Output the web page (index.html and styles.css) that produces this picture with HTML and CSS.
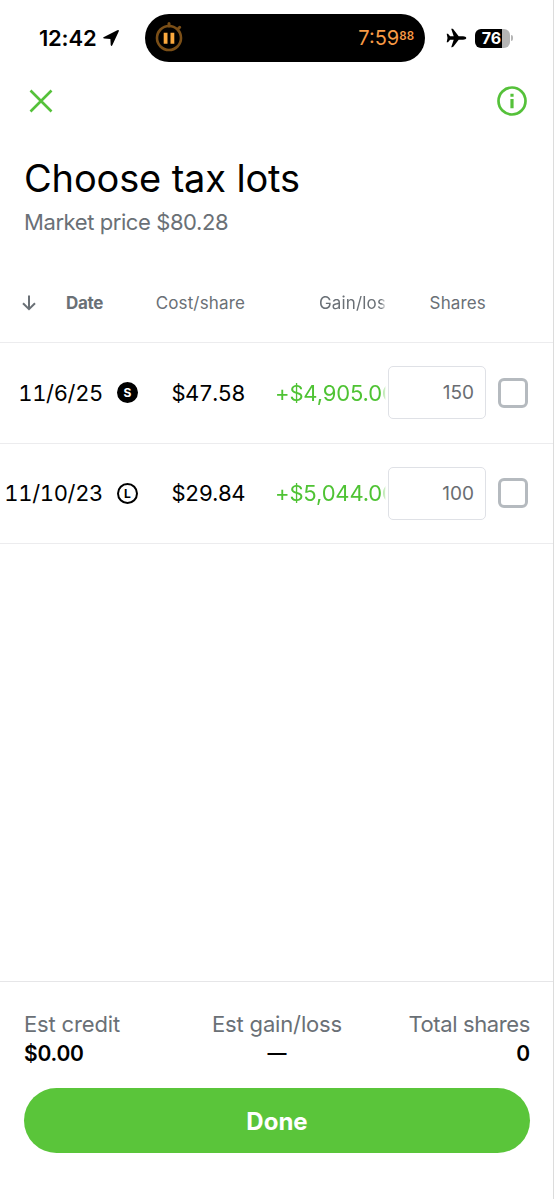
FILE: index.html
```html
<!DOCTYPE html>
<html lang="en">
<head>
    <meta charset="UTF-8">
    <meta name="viewport" content="width=device-width, initial-scale=1.0">
    <title>Choose tax lots</title>
    <link rel="stylesheet" href="styles.css">
</head>
<body>
    <div class="screen">
        <div class="status-bar">
            <span class="clock">12:42</span>
            <svg class="location" width="18" height="18" viewBox="0 0 18 18">
                <path d="M1.5 8.2 L15.3 1.2 Q17.6 .3 16.7 2.6 L10.3 16.2 Q9.3 17.7 8.7 15.9 L8.4 9.9 L2.2 9.6 Q.3 9.1 1.5 8.2Z"/>
            </svg>
            <div class="island">
                <svg width="30" height="32" viewBox="0 0 30 32" fill="none">
                    <circle cx="14" cy="17" r="12" stroke="#7b4f17" stroke-width="2.6"/>
                    <path d="M14 5V2.500M23.200 7.800l1.500-1.500" stroke="#7b4f17" stroke-width="3" stroke-linecap="round"/>
                    <path d="M8.7 11.7h3.8v11H8.7zM15.5 11.7h3.8v11h-3.8z" fill="#fba93e"/>
                </svg>
                <span class="timer">7:59<span class="hundredths">88</span></span>
            </div>
            <svg class="plane" width="21" height="20" viewBox="0 0 21 20">
                <path d="M20.3 10c0-1-1.7-1.7-3.2-1.7h-4.4L7.5 1.4C7 .8 6.500.7 5.200.7l2.500 7.600H4.100L2 5.700H.7L1.500 10 .7 14.300H2l2.100-2.600h3.600L5.200 19.300c1.300 0 1.800-.1 2.300-.7l5.200-6.900h4.400c1.500 0 3.200-.7 3.200-1.700z"/>
            </svg>
            <div class="battery"><span>76</span></div>
            <span class="battery-tip"></span>
        </div>

        <div class="nav">
            <svg width="24" height="24" viewBox="0 0 24 24" fill="none" stroke="#55c13a" stroke-width="2.6">
                <path d="M1.500 1.500l21 21M22.500 1.500l-21 21"/>
            </svg>
            <svg width="30" height="30" viewBox="0 0 30 30" fill="none" stroke="#55c13a">
                <circle cx="15" cy="15" r="13.500" stroke-width="2.700"/>
                <path d="M15 7.700v3M15 13v9.300" stroke-width="3.200"/>
            </svg>
        </div>

        <h1>Choose tax lots</h1>
        <p class="market-price">Market price $80.28</p>

        <div class="row head">
            <div class="date">
                <svg width="14" height="16" viewBox="0 0 14 16" fill="none" stroke="#6a7076" stroke-width="2">
                    <path d="M7 .5v13.500M1 8.200l6 6 6-6"/>
                </svg>
                <b>Date</b>
            </div>
            <div class="cost">Cost/share</div>
            <div class="gain">Gain/loss</div>
            <div class="shares">Shares</div>
        </div>

        <div class="row">
            <div class="date">11/6/25</div>
            <div class="term short">S</div>
            <div class="cost">$47.58</div>
            <div class="gain">+$4,905.00</div>
            <div class="shares-box">150</div>
            <div class="checkbox"></div>
        </div>

        <div class="row">
            <div class="date">11/10/23</div>
            <div class="term">L</div>
            <div class="cost">$29.84</div>
            <div class="gain">+$5,044.00</div>
            <div class="shares-box">100</div>
            <div class="checkbox"></div>
        </div>

        <div class="footer">
            <div class="totals">
                <div>
                    <div class="label">Est credit</div>
                    <div class="value">$0.00</div>
                </div>
                <div class="middle">
                    <div class="label">Est gain/loss</div>
                    <div class="value">—</div>
                </div>
                <div class="right">
                    <div class="label">Total shares</div>
                    <div class="value">0</div>
                </div>
            </div>
            <button class="done">Done</button>
        </div>
    </div>
</body>
</html>
```
FILE: styles.css
```css
* {
    box-sizing: border-box;
}
body {
    margin: 0;
    font-family: Inter, "Liberation Sans", sans-serif;
    color: #000;
    background: #fff;
}
.screen {
    width: 554px;
    height: 1199px;
    display: flex;
    flex-direction: column;
    border-right: 1px solid #dcdcdc;
    overflow: hidden;
}

/* status bar */
.status-bar {
    display: flex;
    align-items: center;
    height: 76px;
    padding-left: 39px;
}
.clock {
    width: 58px;
    font-size: 22px;
    font-weight: 560;
    letter-spacing: -0.2px;
    white-space: nowrap;
}
.location {
    margin: 0 25px 0 5px;
}
.island {
    display: flex;
    align-items: center;
    justify-content: space-between;
    width: 280px;
    height: 48px;
    padding: 0 11px 0 10px;
    border-radius: 24px;
    background: #000;
}
.island svg {
    margin-top: -2px;
}
.timer {
    display: flex;
    font-size: 20px;
    color: #f79a45;
}
.hundredths {
    font-size: 11.5px;
    font-weight: 600;
    line-height: 20px;
}
.plane {
    margin-left: 21px;
}
.battery {
    width: 35px;
    height: 19px;
    margin-left: 8px;
    padding-right: 2px;
    border-radius: 6px;
    background: linear-gradient(to right, #000 27px, #b5b5b5 27px);
    color: #fff;
    font-size: 16px;
    font-weight: 700;
    line-height: 19px;
    text-align: center;
}
.battery-tip {
    width: 2px;
    height: 6px;
    margin-left: 1px;
    border-radius: 0 3px 3px 0;
    background: #b5b5b5;
}

/* page header */
.nav {
    display: flex;
    align-items: center;
    justify-content: space-between;
    height: 50px;
    padding: 0 26px 0 29px;
}
h1 {
    margin: 28px 0 0 24px;
    font-size: 38px;
    font-weight: 440;
    line-height: 48px;
    letter-spacing: -0.15px;
}
.market-price {
    margin: 6px 0 0 24px;
    font-size: 22px;
    font-weight: 370;
    line-height: 28px;
    letter-spacing: -0.42px;
    color: #6a7076;
}

/* lots table */
.row {
    display: flex;
    align-items: center;
    height: 100.500px;
    border-bottom: 1px solid #ececee;
    font-size: 22px;
    font-weight: 370;
}
.head {
    height: 79px;
    margin-top: 28px;
    font-size: 17px;
    font-weight: 370;
    letter-spacing: 0.15px;
    color: #6a7076;
}
.date {
    display: flex;
    justify-content: flex-end;
    width: 103px;
    letter-spacing: -0.35px;
    font-variant-numeric: tabular-nums;
    white-space: nowrap;
}
.head .date {
    justify-content: space-between;
    align-items: center;
    padding-left: 22px;
}
.term {
    width: 21px;
    height: 21px;
    margin: 0 -35px 0 14px;
    border: 2px solid #000;
    border-radius: 50%;
    font-size: 12px;
    font-weight: 700;
    line-height: 17px;
    text-align: center;
}
.short {
    background: #000;
    color: #fff;
}
.cost {
    width: 142px;
    text-align: right;
    font-variant-numeric: tabular-nums;
}
.row:not(.head) .cost {
    letter-spacing: -0.6px;
}
/* long amounts fade out under the shares field */
.gain {
    width: 111px;
    margin-left: 30px;
    overflow: hidden;
    white-space: nowrap;
    letter-spacing: -0.15px;
    color: #4fc334;
    -webkit-mask-image: linear-gradient(to left, transparent, #000 5px);
    mask-image: linear-gradient(to left, transparent, #000 5px);
}
.head .gain {
    width: 67px;
    margin-left: 74px;
    letter-spacing: 0.15px;
    color: inherit;
}
.shares {
    width: 100px;
    text-align: right;
}
.shares-box {
    width: 98px;
    height: 53px;
    margin-left: 2px;
    padding-right: 11px;
    border: 1.500px solid #dfe1e6;
    border-radius: 5px;
    font-size: 19px;
    line-height: 52px;
    text-align: right;
    color: #6a6d72;
}
.checkbox {
    width: 30px;
    height: 30px;
    margin-left: 12px;
    border: 3px solid #b5babf;
    border-radius: 6px;
}

/* footer */
.footer {
    height: 218px;
    margin-top: auto;
    padding: 28px 23px 0 24px;
    border-top: 1px solid #e6e6e8;
}
.totals {
    display: grid;
    grid-template-columns: 1fr 1fr 1fr;
}
.label {
    font-size: 22px;
    font-weight: 370;
    line-height: 28px;
    letter-spacing: -0.15px;
    color: #6a7076;
}
.value {
    font-size: 21px;
    font-weight: 600;
    line-height: 32px;
    letter-spacing: -0.2px;
}
.middle {
    text-align: center;
}
.middle .value {
    font-size: 19px;
}
.right {
    text-align: right;
}
.right .label {
    letter-spacing: -0.38px;
}
.done {
    display: block;
    width: 100%;
    height: 65px;
    margin-top: 18px;
    padding-top: 3px;
    border: none;
    border-radius: 33px;
    background: #5ac53a;
    color: #fff;
    font-family: inherit;
    font-size: 24px;
    font-weight: 700;
}
```
